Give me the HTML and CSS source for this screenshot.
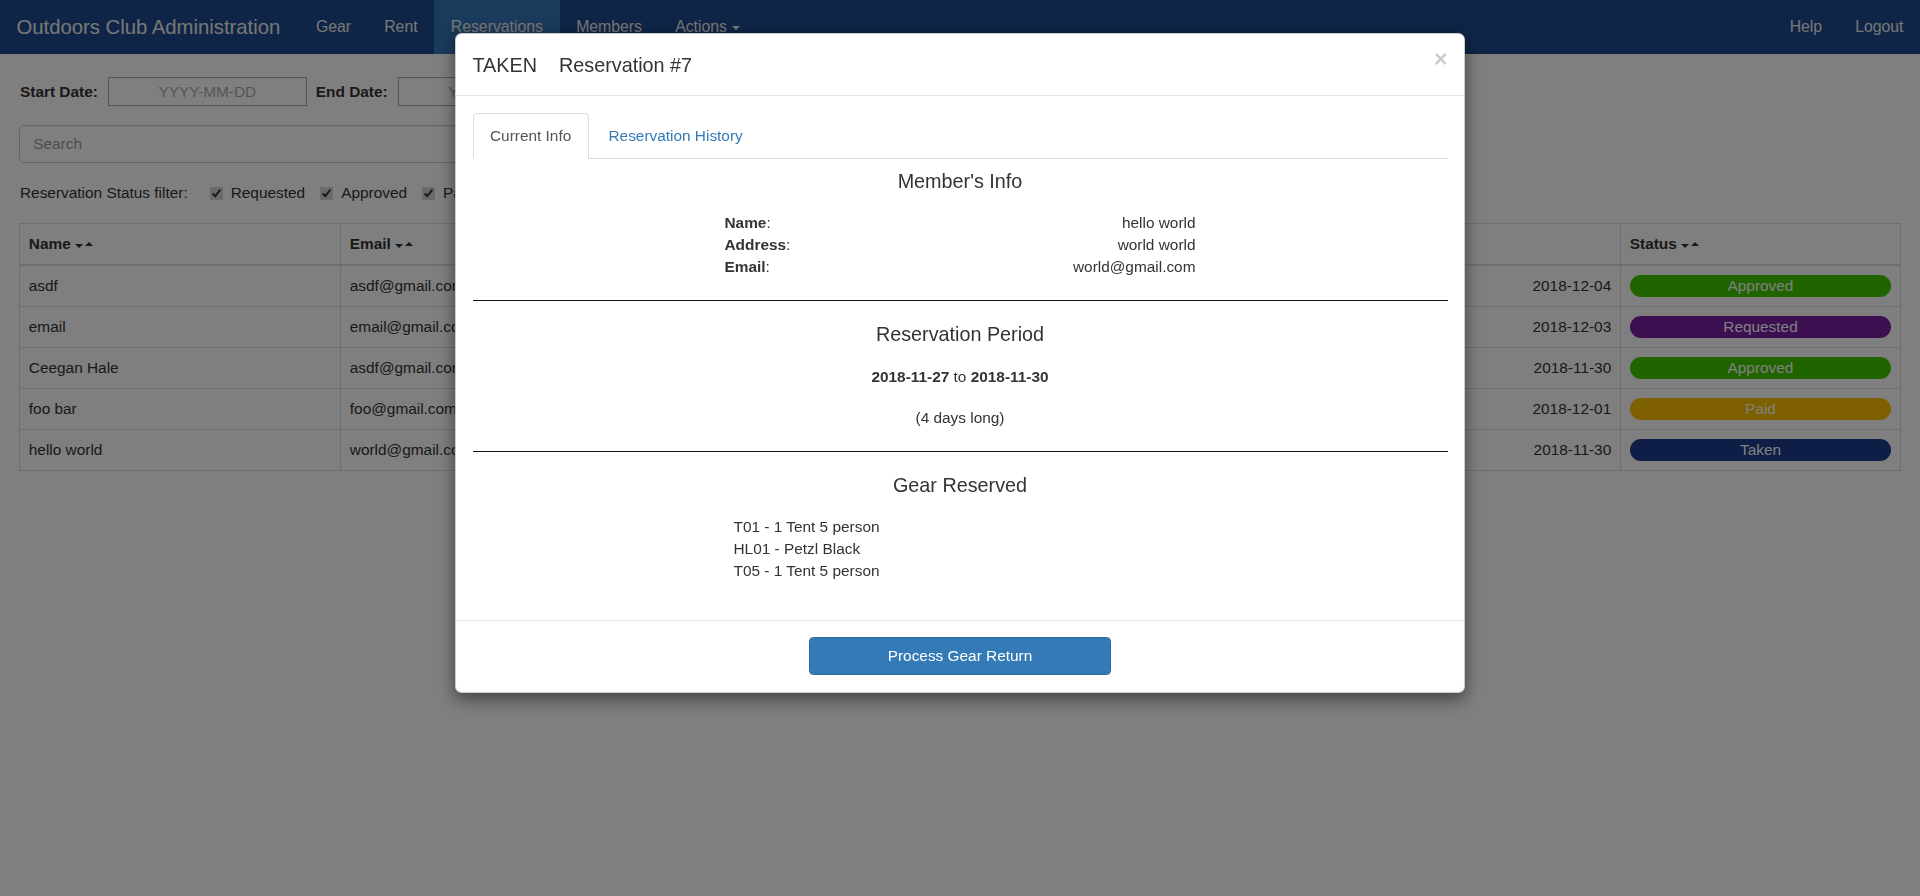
FILE: index.html
```html
<!DOCTYPE html>
<html lang="en">
<head>
<meta charset="utf-8">
<title>Outdoors Club Administration</title>
<link rel="stylesheet" href="styles.css">
</head>
<body>
<nav class="navbar">
  <a class="brand" href="#">Outdoors Club Administration</a>
  <ul class="nav">
    <li><a href="#">Gear</a></li>
    <li><a href="#">Rent</a></li>
    <li class="active"><a href="#">Reservations</a></li>
    <li><a href="#">Members</a></li>
    <li><a href="#">Actions <span class="caret"></span></a></li>
  </ul>
  <ul class="nav nav-right">
    <li><a href="#">Help</a></li>
    <li><a href="#">Logout</a></li>
  </ul>
</nav>

<main class="page">
  <div class="date-filter">
    <label class="date-label">Start Date:</label>
    <input class="date-input" type="text" placeholder="YYYY-MM-DD">
    <label class="date-label">End Date:</label>
    <input class="date-input" type="text" placeholder="YYYY-MM-DD">
  </div>

  <input class="search" type="text" placeholder="Search">

  <div class="status-filter">
    <span class="filter-title">Reservation Status filter:</span>
    <label class="chk-label"><input class="chk" type="checkbox" checked>Requested</label>
    <label class="chk-label"><input class="chk" type="checkbox" checked>Approved</label>
    <label class="chk-label"><input class="chk" type="checkbox" checked>Paid</label>
  </div>

  <table class="res-table">
    <colgroup>
      <col class="c-name"><col class="c-email"><col class="c-start"><col class="c-end"><col class="c-status">
    </colgroup>
    <thead>
      <tr>
        <th>Name<span class="sort"><span class="dn"></span><span class="up"></span></span></th>
        <th>Email<span class="sort"><span class="dn"></span><span class="up"></span></span></th>
        <th>Start Date<span class="sort"><span class="dn"></span><span class="up"></span></span></th>
        <th>End Date<span class="sort"><span class="dn"></span><span class="up"></span></span></th>
        <th>Status<span class="sort"><span class="dn"></span><span class="up"></span></span></th>
      </tr>
    </thead>
    <tbody>
      <tr><td>asdf</td><td>asdf@gmail.com</td><td class="num">2018-12-01</td><td class="num">2018-12-04</td><td><span class="badge approved">Approved</span></td></tr>
      <tr><td>email</td><td>email@gmail.com</td><td class="num">2018-12-01</td><td class="num">2018-12-03</td><td><span class="badge requested">Requested</span></td></tr>
      <tr><td>Ceegan Hale</td><td>asdf@gmail.com</td><td class="num">2018-11-28</td><td class="num">2018-11-30</td><td><span class="badge approved">Approved</span></td></tr>
      <tr><td>foo bar</td><td>foo@gmail.com</td><td class="num">2018-11-29</td><td class="num">2018-12-01</td><td><span class="badge paid">Paid</span></td></tr>
      <tr><td>hello world</td><td>world@gmail.com</td><td class="num">2018-11-27</td><td class="num">2018-11-30</td><td><span class="badge taken">Taken</span></td></tr>
    </tbody>
  </table>
</main>

<div class="backdrop"></div>
<div class="modal">
  <div class="modal-dialog">
    <div class="modal-content">
      <div class="modal-header">
        <button class="close" type="button">&times;</button>
        <h4 class="modal-title"><span class="state">TAKEN</span> Reservation #7</h4>
      </div>
      <div class="modal-body">
        <ul class="tabs">
          <li class="active"><a href="#">Current Info</a></li>
          <li><a href="#">Reservation History</a></li>
        </ul>
        <div class="tab-pane">
          <h4 class="section-title">Member's Info</h4>
          <div class="info">
            <div class="info-row"><span><b>Name</b>:</span><span>hello world</span></div>
            <div class="info-row"><span><b>Address</b>:</span><span>world world</span></div>
            <div class="info-row"><span><b>Email</b>:</span><span>world@gmail.com</span></div>
          </div>
          <hr class="divider">
          <h4 class="section-title">Reservation Period</h4>
          <p class="period"><b>2018-11-27</b> to <b>2018-11-30</b></p>
          <p class="duration">(4 days long)</p>
          <hr class="divider">
          <h4 class="section-title">Gear Reserved</h4>
          <ul class="gear-list">
            <li>T01 - 1 Tent 5 person</li>
            <li>HL01 - Petzl Black</li>
            <li>T05 - 1 Tent 5 person</li>
          </ul>
        </div>
      </div>
      <div class="modal-footer">
        <button class="btn-primary" type="button">Process Gear Return</button>
      </div>
    </div>
  </div>
</div>
</body>
</html>
```

FILE: styles.css
```css
* { box-sizing: border-box; }

html, body {
  margin: 0;
  padding: 0;
}

body {
  font-family: "Liberation Sans", Arial, Helvetica, sans-serif;
  font-size: 15.4px;
  line-height: 22px;
  color: #333;
  background: #fff;
}

a { text-decoration: none; }

/* ---------- navbar ---------- */
.navbar {
  display: flex;
  height: 54px;
  background: #1e4b8f;
}

.brand {
  display: flex;
  align-items: center;
  padding: 0 19px 0 16.5px;
  font-size: 20.3px;
  color: #eee;
}

.nav {
  display: flex;
  margin: 0;
  padding: 0;
  list-style: none;
}

.nav li { display: flex; }

.nav a {
  display: flex;
  align-items: center;
  padding: 0 16.6px;
  font-size: 15.8px;
  color: #eee;
}

.nav .active a { background: #3576b8; }

.nav-right { margin-left: auto; }
.nav-right a { padding: 0 16.5px; }

.caret {
  display: inline-block;
  width: 0;
  height: 0;
  margin-left: 5px;
  margin-top: 2px;
  border-top: 4.4px solid #eee;
  border-left: 4.4px solid transparent;
  border-right: 4.4px solid transparent;
}

/* ---------- page ---------- */
.page {
  padding: 0 20px 0 19px;
}

.date-filter {
  display: flex;
  align-items: center;
  margin-top: 23px;
  height: 29px;
}

.date-label {
  font-weight: bold;
  margin-right: 10px;
  padding-left: 1px;
}

.date-input {
  width: 199px;
  height: 29px;
  margin: 0 8px 0 0;
  border: 1px solid #aaa;
  border-radius: 0;
  font: inherit;
  text-align: center;
  padding: 0 4px;
}

.date-input::placeholder { color: #aaa; }

.search {
  display: block;
  width: 900px;
  height: 38px;
  margin-top: 19px;
  padding: 6.6px 13.2px;
  border: 1px solid #ccc;
  border-radius: 4.4px;
  font: inherit;
  color: #555;
  box-shadow: inset 0 1px 1px rgba(0,0,0,.075);
}

.search::placeholder { color: #999; }

.status-filter {
  display: flex;
  align-items: center;
  margin-top: 19px;
  height: 22px;
  padding-left: 1px;
}

.filter-title { margin-right: 22px; }

.chk-label {
  display: flex;
  align-items: center;
  margin-right: 15px;
}

.chk {
  width: 13px;
  height: 13px;
  margin: 0 8px 0 0;
  accent-color: #d6d6d6;
}

/* ---------- table ---------- */
.res-table {
  width: 100%;
  margin-top: 19px;
  border-collapse: collapse;
  table-layout: fixed;
  border: 1px solid #ddd;
}

.c-name { width: 321px; }
.c-email { width: 260px; }
.c-start { width: 266px; }
.c-end { width: 754px; }
.c-status { width: 280px; }

.res-table th,
.res-table td {
  padding: 9px 8.8px;
  border: 1px solid #ddd;
  text-align: left;
  white-space: nowrap;
  overflow: hidden;
  line-height: 22px;
}

.res-table th {
  font-weight: bold;
  border-bottom-width: 2px;
}

.res-table td.num { text-align: right; }

.sort {
  display: inline-flex;
  align-items: center;
  margin-left: 4px;
  vertical-align: middle;
}

.sort .dn,
.sort .up {
  width: 0;
  height: 0;
  border-left: 4px solid transparent;
  border-right: 4px solid transparent;
}

.sort .dn { border-top: 4.4px solid #333; margin-top: 2px; }
.sort .up { border-bottom: 4.4px solid #333; margin-left: 2px; margin-top: -2px; }

.badge {
  display: block;
  height: 22px;
  line-height: 22px;
  border-radius: 11px;
  color: #fff;
  text-align: center;
}

.approved { background: #40c800; }
.requested { background: #781ea0; }
.paid { background: #ffc000; }
.taken { background: #1e3c8e; }

/* ---------- modal ---------- */
.backdrop {
  position: fixed;
  top: 0;
  left: 0;
  right: 0;
  bottom: 0;
  background: rgba(0,0,0,.5);
}

.modal {
  position: fixed;
  top: 0;
  left: 0;
  right: 0;
  bottom: 0;
  overflow: hidden;
}

.modal-dialog {
  width: 1010px;
  margin: 33px auto;
}

.modal-content {
  background: #fff;
  border: 1px solid rgba(0,0,0,.2);
  border-radius: 6.6px;
  box-shadow: 0 5.5px 16.5px rgba(0,0,0,.5);
}

.modal-header {
  padding: 16.5px;
  border-bottom: 1px solid #e5e5e5;
}

.modal-title {
  margin: 0;
  font-size: 19.8px;
  font-weight: normal;
  line-height: 28px;
  color: #333;
}

.state { margin-right: 16.5px; }

.close {
  float: right;
  margin-top: -3px;
  padding: 0;
  border: 0;
  background: transparent;
  font-family: inherit;
  font-size: 23px;
  font-weight: bold;
  line-height: 1;
  color: #000;
  opacity: .2;
  text-shadow: 0 1px 0 #fff;
}

.modal-body {
  padding: 16.5px;
}

.tabs {
  display: flex;
  margin: 0;
  padding: 0;
  list-style: none;
  border-bottom: 1px solid #ddd;
}

.tabs li {
  margin-bottom: -1px;
  margin-right: 2.2px;
}

.tabs a {
  display: block;
  padding: 11px 16.5px;
  line-height: 22px;
  border: 1px solid transparent;
  border-radius: 4.4px 4.4px 0 0;
  color: #337ab7;
}

.tabs .active a {
  color: #555;
  background: #fff;
  border-color: #ddd #ddd transparent;
}

.section-title {
  margin: 11px 0;
  font-size: 19.8px;
  font-weight: normal;
  line-height: 22px;
  text-align: center;
  color: #333;
}

.info {
  width: 471px;
  margin: 20px auto 0;
}

.info-row {
  display: flex;
  justify-content: space-between;
  line-height: 22px;
}

.divider {
  margin: 22px 0;
  border: 0;
  border-top: 1px solid #111;
}

.period {
  margin: 21px 0 0;
  text-align: center;
}

.duration {
  margin: 19px 0 0;
  text-align: center;
}

.gear-list {
  width: 471px;
  margin: 20px auto 21.5px;
  padding: 0 0 0 9px;
  list-style: none;
}

.modal-footer {
  padding: 16.5px;
  border-top: 1px solid #e5e5e5;
  text-align: center;
}

.btn-primary {
  width: 302px;
  height: 38px;
  padding: 6.6px 13.2px;
  font-family: inherit;
  font-size: 15.4px;
  color: #fff;
  background: #337ab7;
  border: 1px solid #2e6da4;
  border-radius: 4.4px;
}
```
